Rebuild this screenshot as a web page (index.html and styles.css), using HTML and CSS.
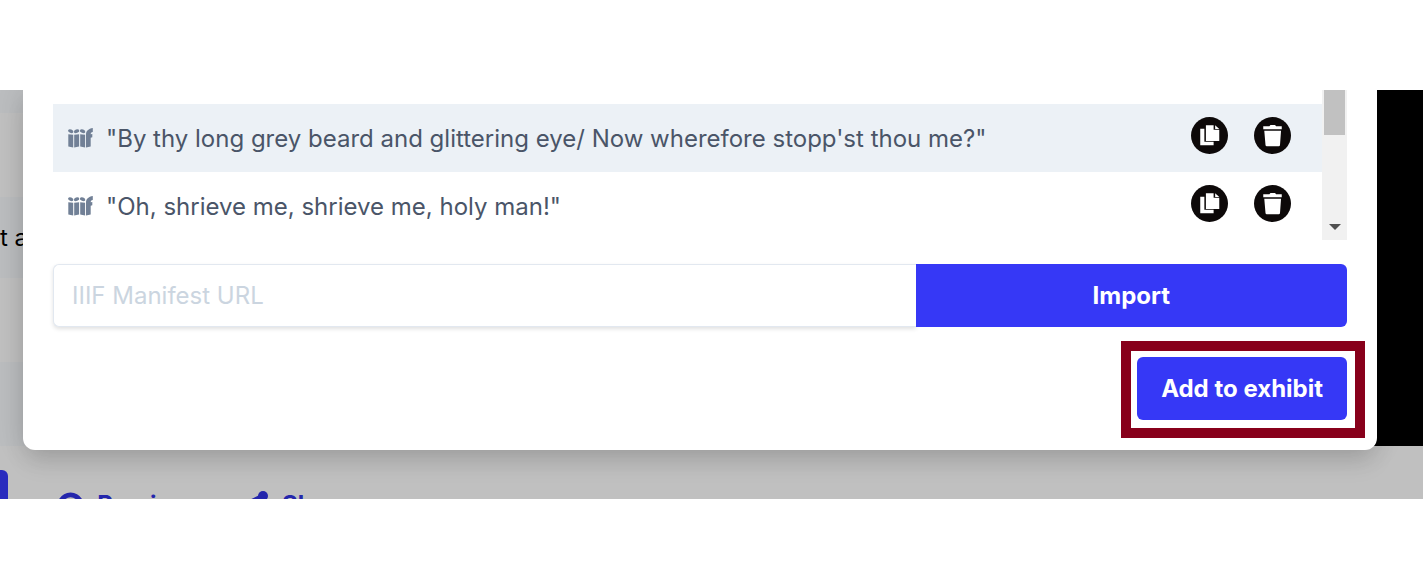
FILE: index.html
```html
<!DOCTYPE html>
<html lang="en">
<head>
<meta charset="utf-8">
<meta name="viewport" content="width=device-width, initial-scale=1">
<title>Add to exhibit</title>
<link rel="stylesheet" href="styles.css">
</head>
<body>
<svg class="defs" aria-hidden="true">
  <symbol id="iiif" viewBox="0 0 25 20">
    <path d="M.3 6.200 5.200 6.700v12.900L.3 18.500ZM6.200 6.700l4.900-.5v12.300L6.200 19.600ZM12.200 6.200l4.900.5v12.900l-4.900-1.100ZM18 6.500C18 3 20.500 .6 24.800 0v4c-1.600.3-2.100 1-2.100 2.200l1.600-.3v3.300l-1.600.6v8.700L18 19.600Z"/>
    <ellipse cx="2.700" cy="3.200" rx="2.700" ry="1.800" transform="rotate(22 2.700 3.200)"/>
    <ellipse cx="8.600" cy="3.200" rx="2.800" ry="1.800" transform="rotate(-22 8.600 3.200)"/>
    <ellipse cx="14.600" cy="3.200" rx="2.800" ry="1.800" transform="rotate(22 14.600 3.200)"/>
  </symbol>
  <symbol id="copy" viewBox="0 0 36 36">
    <circle cx="18" cy="18" r="18" fill="#0d0909"/>
    <path fill="#fff" d="M9 11.500h4v12.500h9v3.500H9ZM14.500 8H22v4.500h5.500v10.800h-13ZM23.500 8l4 3.600h-4Z"/>
  </symbol>
  <symbol id="trash" viewBox="0 0 36 36">
    <circle cx="18" cy="18" r="18" fill="#0d0909"/>
    <path fill="#fff" d="M9 9h6l1-1.300h4.500l1 1.300H27v3H9ZM10 13.300h16.300l-1 14q-.1 1.200-1.300 1.200H12.500q-1.200 0-1.300-1.200Z"/>
  </symbol>
</svg>
<main class="viewport">
  <div class="page">
    <div class="workspace">
      <ul class="items">
        <li></li><li></li><li>t a</li><li></li><li></li>
      </ul>
      <div class="viewer"></div>
    </div>
    <div class="toolbar">
      <button class="edge" aria-label="Save"></button>
      <button class="action"><svg width="28" height="28" viewBox="0 0 28 28" aria-hidden="true"><path fill="none" stroke="currentColor" stroke-width="5" d="M2 14C7 0 21 0 26 14 21 28 7 28 2 14Z"/><circle cx="14" cy="14" r="4" fill="currentColor"/></svg>Preview</button>
      <button class="action"><svg width="28" height="28" viewBox="0 0 28 28" aria-hidden="true"><path fill="none" stroke="currentColor" stroke-width="5" d="M22 5 6 13l16 10"/><g fill="currentColor"><circle cx="22" cy="5" r="5"/><circle cx="6" cy="13" r="5"/><circle cx="22" cy="23" r="5"/></g></svg>Share</button>
    </div>
  </div>
  <section class="modal" role="dialog" aria-label="Add to exhibit">
    <div class="list">
      <ul class="manifests">
        <li class="manifest selected">
          <svg class="logo" aria-hidden="true"><use href="#iiif"/></svg>
          <span class="title">"By thy long grey beard and glittering eye/ Now wherefore stopp'st thou me?"</span>
          <button class="round" aria-label="Copy"><svg><use href="#copy"/></svg></button>
          <button class="round" aria-label="Delete"><svg><use href="#trash"/></svg></button>
        </li>
        <li class="manifest">
          <svg class="logo" aria-hidden="true"><use href="#iiif"/></svg>
          <span class="title">"Oh, shrieve me, shrieve me, holy man!"</span>
          <button class="round" aria-label="Copy"><svg><use href="#copy"/></svg></button>
          <button class="round" aria-label="Delete"><svg><use href="#trash"/></svg></button>
        </li>
      </ul>
      <div class="scrollbar" aria-hidden="true">
        <div class="thumb"></div>
        <svg width="12" height="6" viewBox="0 0 12 6"><path fill="#505050" d="M0 0h12L6 6Z"/></svg>
      </div>
    </div>
    <form class="import">
      <input type="text" placeholder="IIIF Manifest URL" aria-label="IIIF Manifest URL">
      <button type="button">Import</button>
    </form>
    <div class="footer">
      <div class="highlight"><button class="add">Add to exhibit</button></div>
    </div>
  </section>
</main>
</body>
</html>
```
FILE: styles.css
```css
* { box-sizing: border-box; }
body {
  margin: 0;
  background: #fff;
  font-family: Inter, "Liberation Sans", sans-serif;
  font-size: 24px;
  line-height: 36px;
}
ul { list-style: none; margin: 0; padding: 0; }
button { border: 0; padding: 0; font: inherit; cursor: pointer; }
.defs { position: absolute; width: 0; height: 0; }
.viewport { position: relative; margin: 90px 0; overflow: hidden; }
.page { background: #c0c0c0; }
.workspace { display: flex; }
.items { flex: 1; }
.items li { height: 84px; padding: 23px 0; white-space: nowrap; color: #000; }
.items li:first-child { height: 23px; padding: 0; }
.items li:nth-child(odd) { background: #bbbdbf; }
.items li:nth-child(3) { height: 81px; }
.viewer { flex: 1; background: #000; }
.toolbar { display: flex; align-items: flex-start; height: 53px; padding-top: 24px; overflow: hidden; }
.edge { width: 8px; height: 60px; margin-right: 49px; background: #292bbe; border-radius: 0 6px 0 0; }
.action {
  display: flex;
  align-items: center;
  gap: 13px;
  width: 134px;
  height: 70px;
  margin-right: 50px;
  background: none;
  color: #2426ac;
  font-weight: 700;
}
.modal {
  position: absolute;
  top: 0;
  left: 23px;
  right: 46px;
  padding: 0 30px 12px;
  background: #fff;
  border-radius: 0 0 12px 12px;
  box-shadow: 0 16px 24px -4px rgba(0, 0, 0, .1), 0 0 28px rgba(0, 0, 0, .14);
}
.list { display: flex; height: 150px; }
.manifests { flex: 1; padding-top: 14px; }
.manifest {
  display: flex;
  align-items: center;
  height: 68px;
  padding: 0 31px 0 15px;
  color: #4a5568;
}
.selected { background: #ecf1f6; }
.logo { width: 25px; height: 20px; margin-right: 13px; fill: #718096; }
.title { flex: 1; padding-top: 2px; }
.round { width: 37px; height: 37px; margin: 0 0 5px 26px; background: none; }
.round svg { display: block; width: 37px; height: 37px; }
.scrollbar {
  display: flex;
  flex-direction: column;
  align-items: center;
  justify-content: space-between;
  width: 25px;
  padding-bottom: 10px;
  background: #f1f1f1;
}
.thumb { width: 21px; height: 45px; background: #c1c1c1; }
.import { display: grid; grid-template-columns: 2fr 1fr; height: 63px; margin-top: 24px; }
.import input {
  min-width: 0;
  padding: 0 18px;
  border: 1px solid #e2e8f0;
  border-right: 0;
  border-radius: 6px 0 0 6px;
  box-shadow: 0 2px 4px rgba(0, 0, 0, .12);
  font: inherit;
  outline: 0;
}
.import input::placeholder { color: #cbd5e0; opacity: 1; }
.import button { background: #3638f6; color: #fff; font-weight: 700; border-radius: 0 6px 6px 0; }
.footer { display: flex; justify-content: flex-end; margin: 14px -18px 0 0; }
.highlight { padding: 6px 8px 8px 6px; border: 10px solid #88001b; }
.add {
  display: block;
  height: 63px;
  padding: 0 24px;
  background: #3638f6;
  color: #fff;
  font-weight: 700;
  border-radius: 6px;
}
```
